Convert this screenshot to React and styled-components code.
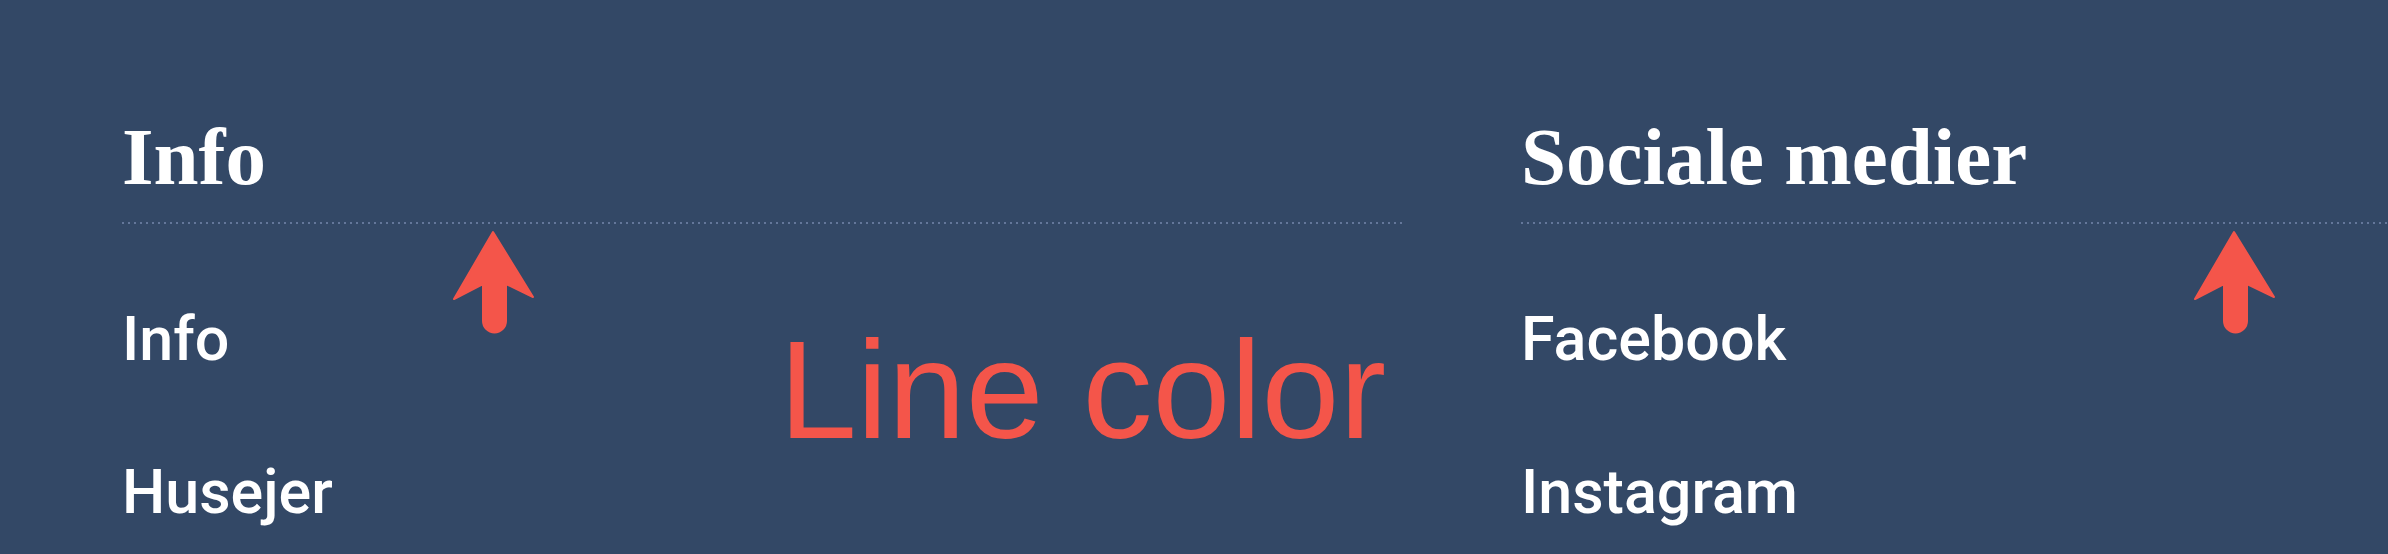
import styled, { createGlobalStyle } from "styled-components";

const GlobalStyle = createGlobalStyle`
  html, body {
    margin: 0;
    padding: 0;
    background: #334866;
    overflow: hidden;
  }
`;

const Footer = styled.footer`
  position: relative;
  display: grid;
  grid-template-columns: 1280px 1fr;
  column-gap: 119px;
  padding: 117px 0 0 122px;
  height: 554px;
  box-sizing: border-box;
  width: 100%;
`;

const Column = styled.section`
  display: flex;
  flex-direction: column;
  min-width: 0;
`;

const Heading = styled.h3`
  margin: 0;
  font-family: "Liberation Serif", "Times New Roman", serif;
  font-weight: 700;
  font-size: 81px;
  line-height: 1;
  color: #ffffff;
`;

const Rule = styled.div`
  margin-top: 24px;
  height: 2px;
  background-image: linear-gradient(to right, #64779a 2px, transparent 2px);
  background-size: 6px 2px;
`;

const Links = styled.ul`
  list-style: none;
  margin: 85px 0 0;
  padding: 0;
  display: flex;
  flex-direction: column;
  gap: 92px;
`;

const Link = styled.li`
  font-family: Roboto, "Liberation Sans", sans-serif;
  font-weight: 500;
  font-size: 61px;
  line-height: 1;
  color: #ffffff;
`;

const Note = styled.div`
  position: absolute;
  left: 779px;
  top: 320px;
  font-family: "Liberation Sans", Arial, sans-serif;
  font-size: 140px;
  line-height: 1;
  color: #f4554a;
`;

const Pointer = styled.svg`
  position: absolute;
  top: 230px;
  left: ${(p) => p.$x}px;
  width: 84px;
  height: 104px;
`;

function Arrow({ x }) {
  return (
    <Pointer $x={x} viewBox="0 0 84 104">
      <path
        d="M42 2 L82 67 L55 54 L55 91 A11.5 11.5 0 0 1 32 91 L32 54 L3 69 Z"
        fill="#f4554a"
        stroke="#f4554a"
        strokeWidth="2"
        strokeLinejoin="round"
      />
    </Pointer>
  );
}

const columns = [
  { title: "Info", links: ["Info", "Husejer"] },
  { title: "Sociale medier", links: ["Facebook", "Instagram"] },
];

export default function App() {
  return (
    <>
      <GlobalStyle />
      <Footer>
        {columns.map((col) => (
          <Column key={col.title}>
            <Heading>{col.title}</Heading>
            <Rule />
            <Links>
              {col.links.map((l) => (
                <Link key={l}>{l}</Link>
              ))}
            </Links>
          </Column>
        ))}
        <Arrow x={451} />
        <Arrow x={2192} />
        <Note>Line color</Note>
      </Footer>
    </>
  );
}
